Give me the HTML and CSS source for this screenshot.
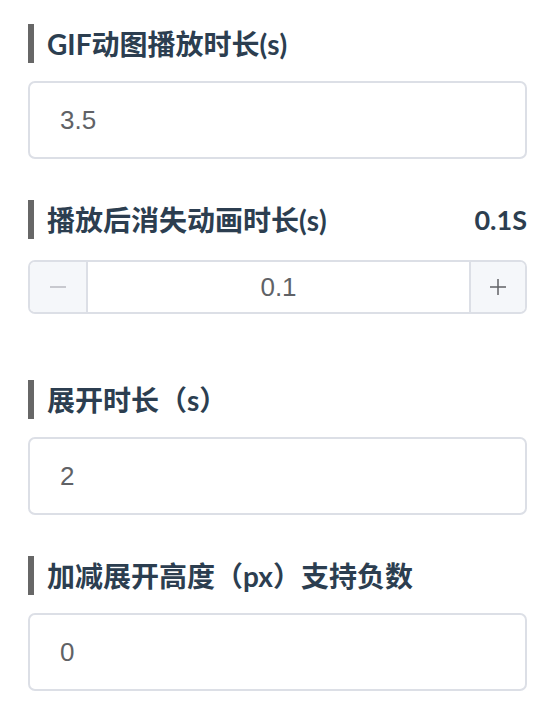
FILE: index.html
```html
<!DOCTYPE html>
<html lang="zh">
<head>
<meta charset="utf-8">
<link rel="stylesheet" href="styles.css">
</head>
<body>
<div class="panel">
  <section class="field">
    <div class="title"><span class="label">GIF动图播放时长(s)</span></div>
    <div class="input"><span class="value">3.5</span></div>
  </section>

  <section class="field field-step">
    <div class="title"><span class="label">播放后消失动画时长(s)</span><span class="extra">0.1S</span></div>
    <div class="stepper">
      <div class="step-btn minus">
        <svg width="18" height="18" viewBox="0 0 18 18"><path d="M1 9h16" stroke="#b8bac0" stroke-width="1.5"/></svg>
      </div>
      <div class="step-value">0.1</div>
      <div class="step-btn plus">
        <svg width="18" height="18" viewBox="0 0 18 18"><path d="M1 9h16M9 1v16" stroke="#606266" stroke-width="1.5"/></svg>
      </div>
    </div>
  </section>

  <section class="field">
    <div class="title"><span class="label">展开时长（s）</span></div>
    <div class="input"><span class="value">2</span></div>
  </section>

  <section class="field">
    <div class="title"><span class="label">加减展开高度（px）支持负数</span></div>
    <div class="input"><span class="value">0</span></div>
  </section>
</div>
</body>
</html>
```

FILE: styles.css
```css
html, body {
  margin: 0;
  padding: 0;
  background: #ffffff;
}

.panel {
  padding: 24px 19px 0 28px;
  display: flex;
  flex-direction: column;
}

.field {
  display: flex;
  flex-direction: column;
  gap: 18px;
  margin-bottom: 41px;
}

.field-step {
  gap: 21px;
  margin-bottom: 66px;
}

.title {
  height: 39px;
  border-left: 6px solid #676767;
  padding-left: 13px;
  display: flex;
  align-items: center;
  justify-content: space-between;
  font-family: "Lato", "Noto Sans CJK SC", sans-serif;
  font-weight: 700;
  font-size: 28px;
  color: #2c3e50;
  line-height: 1;
}

.extra {
  font-size: 27px;
}

.input {
  height: 78px;
  box-sizing: border-box;
  border: 2px solid #dcdfe6;
  border-radius: 7px;
  display: flex;
  align-items: center;
  padding-left: 30px;
  font-family: "Liberation Sans", Arial, sans-serif;
  font-size: 26px;
  color: #606266;
}

.stepper {
  height: 54px;
  box-sizing: border-box;
  border: 2px solid #dcdfe6;
  border-radius: 7px;
  display: flex;
  overflow: hidden;
}

.step-btn {
  width: 56px;
  background: #f5f7fa;
  display: flex;
  align-items: center;
  justify-content: center;
}

.minus {
  border-right: 2px solid #dcdfe6;
}

.plus {
  border-left: 2px solid #dcdfe6;
  width: 54px;
}

.step-value {
  flex: 1;
  display: flex;
  align-items: center;
  justify-content: center;
  font-family: "Liberation Sans", Arial, sans-serif;
  font-size: 26px;
  color: #606266;
}
```
